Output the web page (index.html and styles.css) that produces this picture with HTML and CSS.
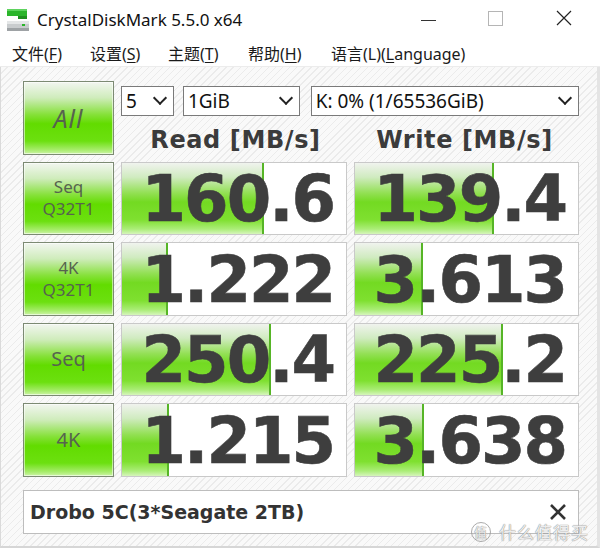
FILE: index.html
```html
<!DOCTYPE html>
<html lang="zh">
  <head>
    <meta charset="UTF-8">
    <title>CrystalDiskMark 5.5.0 x64</title>
    <link rel="stylesheet" href="styles.css">
  </head>

  <body>
    <div class="window">
      <header class="titlebar">
        <svg class="app-icon" width="24" height="24" viewBox="0 0 24 24">
          <rect x="1" y="1" width="20" height="7" fill="#2bb52b"/>
          <rect x="12" y="8" width="9" height="3" fill="#1f8f1f"/>
          <rect x="1" y="1" width="20" height="2" fill="#5fd35f"/>
          <rect x="1" y="13" width="22" height="10" rx="1" fill="#c9ccce"/>
          <rect x="1" y="13" width="22" height="3" fill="#e4e6e7"/>
          <rect x="1" y="20" width="22" height="3" fill="#9ea2a5"/>
          <rect x="16" y="16" width="3" height="2" fill="#2bb52b"/>
        </svg>
        <span class="title">CrystalDiskMark 5.5.0 x64</span>
        <div class="controls">
          <span class="ctl ctl-min"></span>
          <span class="ctl ctl-max"></span>
          <svg class="ctl ctl-close" width="16" height="16" viewBox="0 0 16 16">
            <path d="M1 1 L15 15 M15 1 L1 15" stroke="#222" stroke-width="1.2"/>
          </svg>
        </div>
      </header>

      <nav class="menubar">
        <span class="menu-item">文件(<u>F</u>)</span>
        <span class="menu-item">设置(<u>S</u>)</span>
        <span class="menu-item">主题(<u>T</u>)</span>
        <span class="menu-item">帮助(<u>H</u>)</span>
        <span class="menu-item">语言(L)(<u>L</u>anguage)</span>
      </nav>

      <main class="main">
        <div class="board">
          <button class="label label-all">All</button>

          <div class="top-right">
            <div class="selects">
              <div class="select select-count">5<i class="chev"></i></div>
              <div class="select select-size">1GiB<i class="chev"></i></div>
              <div class="select select-drive">K: 0% (1/65536GiB)<i class="chev"></i></div>
            </div>
            <div class="heads">
              <div class="head">Read [MB/s]</div>
              <div class="head">Write [MB/s]</div>
            </div>
          </div>

          <button class="label label-small">Seq<br>Q32T1</button>
          <div class="value"><div class="bar" style="width: 142px"></div><span>160.6</span></div>
          <div class="value"><div class="bar" style="width: 139px"></div><span>139.4</span></div>

          <button class="label label-small">4K<br>Q32T1</button>
          <div class="value"><div class="bar" style="width: 46px"></div><span>1.222</span></div>
          <div class="value"><div class="bar" style="width: 68px"></div><span>3.613</span></div>

          <button class="label label-big">Seq</button>
          <div class="value"><div class="bar" style="width: 149px"></div><span>250.4</span></div>
          <div class="value"><div class="bar" style="width: 148px"></div><span>225.2</span></div>

          <button class="label label-big">4K</button>
          <div class="value"><div class="bar" style="width: 47px"></div><span>1.215</span></div>
          <div class="value"><div class="bar" style="width: 69px"></div><span>3.638</span></div>
        </div>

        <div class="comment">
          <span>Drobo 5C(3*Seagate 2TB)</span>
          <svg width="20" height="20" viewBox="0 0 20 20">
            <path d="M3 3 L17 17 M17 3 L3 17" stroke="#333" stroke-width="2.6"/>
          </svg>
        </div>

        <div class="watermark"><span class="wm-circle">值</span>什么值得买</div>
      </main>
    </div>
  </body>
</html>
```

FILE: styles.css
```css
* {
  box-sizing: border-box;
}

body {
  margin: 0;
  background-color: #ffffff;
  font-family: "Noto Sans", "Noto Sans CJK SC", sans-serif;
}

.window {
  width: 600px;
  height: 548px;
  display: flex;
  flex-direction: column;
  overflow: hidden;
}

.titlebar {
  display: flex;
  align-items: center;
  height: 35px;
  padding: 3px 0 0 6px;
  background-color: #ffffff;
}

.app-icon {
  margin-top: 2px;
}

.title {
  margin-left: 7px;
  font-size: 17px;
  color: #111;
}

.controls {
  display: flex;
  align-items: center;
  margin-left: auto;
  height: 32px;
}

.ctl {
  display: block;
}

.ctl-min {
  width: 15px;
  height: 1px;
  background-color: #333;
  margin-right: 52px;
  margin-top: 3px;
}

.ctl-max {
  width: 15px;
  height: 15px;
  border: 1px solid #b5b5b5;
  margin-right: 53px;
  margin-top: -2px;
}

.ctl-close {
  margin-right: 28px;
  margin-top: -2px;
}

.menubar {
  display: flex;
  align-items: center;
  height: 32px;
  padding: 4px 0 0 12px;
  background-color: #ffffff;
  border-bottom: 1px solid #ececec;
  font-size: 16px;
  color: #1a1a1a;
}

.menu-item:nth-child(1) { width: 78px; }
.menu-item:nth-child(2) { width: 78px; }
.menu-item:nth-child(3) { width: 80px; }
.menu-item:nth-child(4) { width: 83px; }

.menu-item u {
  text-underline-offset: 2px;
}

.main {
  position: relative;
  flex-grow: 1;
  padding: 14px 0 0 22px;
  background-color: #f8f8f8;
  background-image: repeating-linear-gradient(135deg, #f9f9f9 0 4px, #ebebeb 4px 5px);
  border-left: 1px solid #dadada;
  border-right: 3px solid #e4e4e4;
  border-bottom: 2px solid #d6d6d6;
}

.board {
  display: grid;
  grid-template-columns: 91px 226px 225px;
  grid-auto-rows: 73.5px;
  column-gap: 7px;
  row-gap: 7px;
}

.label {
  margin: 0;
  padding: 0;
  border: 1px solid #7c8a73;
  box-shadow: inset 0 0 0 1px rgba(255, 255, 255, 0.55);
  background: linear-gradient(#f2f6f0 0%, #cfecbb 22%, #86e13a 45%, #62dc00 58%, #6ce010 82%, #a6ec6a 94%, #cdf4a8 100%);
  font-family: "Noto Sans", sans-serif;
  color: #56634f;
  line-height: 1.3;
}

.label-all {
  font-size: 25px;
  font-style: italic;
  letter-spacing: 1px;
}

.label-small {
  font-size: 17px;
}

.label-big {
  font-size: 20px;
}

.top-right {
  grid-column: 2 / 4;
  display: flex;
  flex-direction: column;
}

.selects {
  display: flex;
  margin-top: 5px;
}

.select {
  display: flex;
  align-items: center;
  height: 30px;
  padding-left: 4px;
  border: 1px solid #7a7a7a;
  background-color: #ffffff;
  font-size: 19px;
  color: #111;
}

.select-count {
  width: 53px;
  margin-right: 9px;
}

.select-size {
  width: 117px;
  margin-right: 11px;
}

.select-drive {
  width: 269px;
}

.chev {
  margin-left: auto;
  margin-right: 8px;
  width: 10px;
  height: 10px;
  border-right: 2px solid #222;
  border-bottom: 2px solid #222;
  transform: translateY(-3px) rotate(45deg);
}

.heads {
  display: flex;
  margin-top: 10px;
}

.head {
  width: 233px;
  text-align: center;
  font-family: "DejaVu Sans", sans-serif;
  font-weight: bold;
  font-size: 24px;
  letter-spacing: 0.6px;
  color: #3b3b3b;
}

.value {
  position: relative;
  display: flex;
  align-items: center;
  justify-content: flex-end;
  padding-right: 12px;
  background-color: #ffffff;
  border: 1px solid #c9c9c9;
}

.bar {
  position: absolute;
  left: 0;
  top: 0;
  bottom: 0;
  border-right: 2px solid #56b526;
  background: linear-gradient(#f0f3ee 0%, #d0ebc0 20%, #93e055 42%, #73da22 55%, #7fe030 80%, #abed78 93%, #d6f5bc 100%);
}

.value span {
  position: relative;
  font-family: "DejaVu Sans", sans-serif;
  font-weight: bold;
  font-size: 64px;
  letter-spacing: -2px;
  line-height: 70px;
  color: #3e3e3e;
  margin-top: 2px;
  -webkit-text-stroke: 0.6px #3e3e3e;
}

.comment {
  display: flex;
  align-items: center;
  justify-content: space-between;
  width: 556px;
  height: 44px;
  margin-top: 13px;
  padding: 0 10px 0 6px;
  background-color: #ffffff;
  border: 1px solid #bdbdbd;
  font-family: "DejaVu Sans", sans-serif;
  font-weight: bold;
  font-size: 19px;
  color: #333;
}

.watermark {
  position: absolute;
  right: 8px;
  bottom: 2px;
  display: flex;
  align-items: center;
  font-family: "Noto Sans CJK SC", sans-serif;
  font-size: 17px;
  letter-spacing: 1px;
  color: rgba(255, 255, 255, 0.85);
  text-shadow: 0 0 1px #8a8a8a, 0 0 1px #8a8a8a;
}

.wm-circle {
  display: inline-flex;
  align-items: center;
  justify-content: center;
  width: 20px;
  height: 20px;
  margin-right: 8px;
  border: 1.5px solid rgba(150, 150, 150, 0.8);
  border-radius: 50%;
  font-size: 13px;
}
```
